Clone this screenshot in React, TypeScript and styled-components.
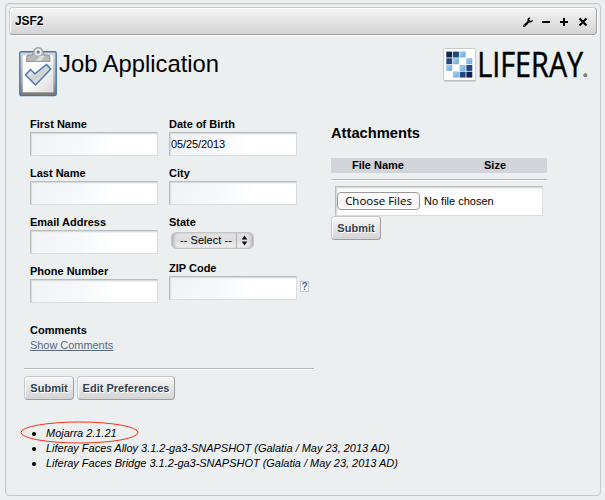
import React from 'react';
import styled, { createGlobalStyle, css } from 'styled-components';

const GlobalStyle = createGlobalStyle`
  * { box-sizing: border-box; }
  body {
    margin: 0;
    background: #ebeff0;
    font-family: "Liberation Sans", Arial, sans-serif;
    font-size: 11px;
    line-height: 15px;
    color: #000;
  }
`;

const Page = styled.div`
  height: 500px;
  padding: 3px 4px 4px 5px;
  overflow: hidden;
`;

const Portlet = styled.section`
  height: 493px;
  border: 1px solid #c4c8ca;
  border-radius: 4px;
  padding: 3px;
  box-shadow: inset 1px 1px 0 #e0e4e5;
`;

const Topper = styled.header`
  display: flex;
  justify-content: space-between;
  align-items: center;
  width: 588px;
  height: 28px;
  padding: 0 7px 0 5px;
  border: 1px solid;
  border-color: #c8c9ca #9e9e9e #9e9e9e #c8c9ca;
  border-radius: 4px;
  background: linear-gradient(#f4f4f4, #d4d4d4);
  box-shadow: 1px 1px 0 #fff, inset 1px 1px 0 #fff;
`;

const TopperTitle = styled.h1`
  margin: 0;
  font-size: 12px;
  letter-spacing: -0.05px;
  text-shadow: 1px 1px #fff;
`;

const Tools = styled.div`
  display: flex;
  align-items: center;
  gap: 8px;
  padding-top: 2px;
  svg { display: block; }
`;

const Banner = styled.div`
  display: flex;
  height: 64px;
  padding: 12px 8px 0 10px;
`;

const BannerTitle = styled.h2`
  flex: 1;
  margin: 3px 0 0 2px;
  font-size: 23.8px;
  line-height: 28px;
  font-weight: 400;
`;

const Columns = styled.div`
  display: flex;
  padding: 18px 0 0 15px;
`;

const FormColumn = styled.div`
  width: 290px;
`;

const Fields = styled.div`
  display: flex;
  gap: 11px;
  height: 206px;
  padding-left: 6px;
`;

const FieldStack = styled.div`
  width: 128px;
`;

const Field = styled.div<{ $gap?: number }>`
  margin-bottom: ${p => p.$gap ?? 10}px;
`;

const Label = styled.label`
  display: block;
  font-weight: 700;
`;

const inset = css`
  border: 1px solid;
  border-color: #b8bcbe #dadddd #dadddd #b8bcbe;
  box-shadow: inset 1px 1px 0 #d9dcde, inset 2px 2px 1px #f0f1f2;
`;

const Input = styled.input`
  ${inset}
  display: block;
  width: 128px;
  height: 24px;
  padding: 0 1px;
  border-radius: 0;
  outline: 0;
  background: linear-gradient(105deg, #f0f4f7 5%, #f6f9fb 40%, #fff 65%);
  font: 11px "Liberation Sans", Arial, sans-serif;
  letter-spacing: -0.1px;
`;

const ZipRow = styled.div`
  display: flex;
  align-items: center;
  gap: 3px;
  width: 142px;
`;

const Help = styled.span`
  flex: none;
  width: 9px;
  height: 11px;
  margin-top: -3px;
  border: 1px solid #c3c8cc;
  background: #fff;
  color: #3d659b;
  font-size: 10px;
  font-weight: 700;
  line-height: 10px;
  text-align: center;
`;

const Select = styled.button`
  display: flex;
  align-items: center;
  width: 83px;
  height: 17px;
  margin: 2px 0 0 2px;
  padding: 0;
  border: 1px solid #c3c5c6;
  border-radius: 5px;
  background: linear-gradient(#e4e4e4, #ddd 50%, #f2f2f2);
  box-shadow: inset 3px 0 3px -1px #b5b5b5, inset -3px 0 3px -1px #b5b5b5;
  font: 11px/13px "Liberation Sans", Arial, sans-serif;
  letter-spacing: 0.05px;
  color: #000;
  span { width: 64px; padding: 0 0 1px 8px; text-align: left; white-space: nowrap; }
  svg { display: block; border-left: 1px solid #b0b0b0; }
`;

const Comments = styled.div`
  padding-left: 6px;
`;

const Link = styled.a`
  color: #5b677d;
  text-decoration: underline;
  letter-spacing: -0.05px;
`;

const Rule = styled.hr`
  height: 2px;
  margin: 15px 0 6px;
  border: 0;
  border-top: 1px solid #b5b7b8;
  border-bottom: 1px solid #fff;
`;

const Buttons = styled.div`
  display: flex;
  gap: 3px;
`;

const Button = styled.button<{ $width: number }>`
  width: ${p => p.$width}px;
  height: 24px;
  padding: 0;
  border: 1px solid;
  border-color: #c8c9ca #9e9e9e #9e9e9e #c8c9ca;
  border-radius: 4px;
  background: linear-gradient(#f6f6f6, #d4d4d4);
  box-shadow: inset 1px 1px 0 #fff;
  color: #34404f;
  font: 700 11px "Liberation Sans", Arial, sans-serif;
  text-shadow: 1px 1px #fff;
  white-space: nowrap;
`;

const Attachments = styled.div`
  width: 216px;
  margin: 6px 0 0 17px;
`;

const Heading = styled.h3`
  margin: 0;
  font-size: 14.7px;
  line-height: 20px;
`;

const TableHead = styled.div`
  display: grid;
  grid-template-columns: 94px 1fr;
  height: 15px;
  margin-top: 15px;
  padding-right: 11px;
  background: #d1d5db;
  font-weight: 700;
  text-align: center;
  span:last-child { padding-left: 29px; }
`;

const TableRule = styled(Rule)`
  margin: 6px 0 5px;
`;

const Upload = styled.div`
  ${inset}
  display: flex;
  align-items: center;
  width: 208px;
  height: 30px;
  margin-left: 4px;
  padding: 0 0 0 1px;
  background: #fff;
`;

const Choose = styled.button`
  width: 83px;
  height: 18px;
  margin-right: 4px;
  padding: 0;
  border: 1px solid #999;
  border-radius: 4px;
  background: linear-gradient(#fff, #f3f3f3 60%, #fff);
  color: #000;
  font: 11.5px/16px "Open Sans", sans-serif;
  white-space: nowrap;
`;

const Versions = styled.ul`
  position: relative;
  margin: 26px 0 0;
  padding: 0 0 0 37px;
  font-style: italic;
  list-style: none;
`;

const Version = styled.li`
  display: flex;
  align-items: center;
  letter-spacing: -0.025px;
  white-space: nowrap;
  &::before {
    content: '';
    width: 4px;
    height: 4px;
    margin: 1px 10px 0 -14px;
    border-radius: 2px;
    background: #000;
  }
`;

const Highlight = styled.svg`
  position: absolute;
  left: 11px;
  top: -5px;
`;

const LogoMark = styled.svg`
  overflow: visible;
  margin-top: 1px;
`;

const Clipboard = () => (
  <svg width="38" height="51" viewBox="0 0 38 51">
    <defs>
      <linearGradient id="board" x2="0" y2="1"><stop stopColor="#d9dadb" /><stop offset=".65" stopColor="#aaa" /><stop offset="1" stopColor="#777" /></linearGradient>
      <linearGradient id="paper" x2="1" y2="1"><stop offset=".45" stopColor="#fff" /><stop offset="1" stopColor="#d8d8d8" /></linearGradient>
      <linearGradient id="tick" x2="1" y2="1"><stop stopColor="#fff" /><stop offset=".5" stopColor="#cfd0d1" /><stop offset="1" stopColor="#f5f5f5" /></linearGradient>
    </defs>
    <rect x=".8" y="4.8" width="36.4" height="43.8" rx="1.5" fill="url(#board)" stroke="#4676a9" strokeWidth="1.4" />
    <path d="M4 8.5H34V45H4Z" fill="url(#paper)" stroke="#eee" strokeWidth=".6" />
    <path d="M7.5 14.5V10.5Q7.5 8 10 8H13.5Q14.2 .6 19.2 .6T25 8H28.5Q31 8 31 10.5V14.5Z" fill="#b6b7b8" stroke="#858789" strokeWidth=".8" />
    <path d="M17 14L21 9H26L22 14Z" fill="#ddd" />
    <circle cx="19.2" cy="5.1" r="3" fill="#e9eced" stroke="#fff" strokeWidth=".7" />
    <circle cx="19.2" cy="5.1" r="1.6" fill="#587baa" />
    <path d="M6.5 28L11.5 22.5L15.8 26.8L27.5 17.5L31.8 22L16.5 38Z" fill="url(#tick)" stroke="#4676a9" strokeWidth="1.4" />
  </svg>
);

const NAVY = '#10244f';
const BLUE = '#214680';
const SKY = '#7bb4e5';
const tiles: [number, number, string][] = [
  [0, 0, NAVY], [1, 0, BLUE], [2, 0, SKY],
  [0, 1, BLUE], [1, 1, SKY], [3, 1, SKY],
  [0, 2, SKY], [2, 2, SKY], [3, 2, BLUE],
  [1, 3, SKY], [2, 3, BLUE], [3, 3, NAVY],
];

const Logo = () => (
  <LogoMark width="146" height="36" viewBox="0 0 146 36">
    <rect x=".5" y=".5" width="32" height="32" rx="1" fill="#fff" stroke="#c8cccd" />
    <path d="M1 33H33" stroke="#b3b6b8" />
    {tiles.map(([col, row, color]) => (
      <g key={`${col}-${row}`} transform={`translate(${3.3 + col * 6.7} ${3.6 + row * 6.7})`}>
        <rect width="5.9" height="5.9" fill={color} />
        {color === SKY && <path d="M0 0H5.9L0 5.9Z" fill="#a2ccef" opacity=".7" />}
      </g>
    ))}
    <text x="34.2" y="29" fontFamily="Open Sans, sans-serif" fontSize="35.5" textLength="106" lengthAdjust="spacingAndGlyphs" stroke="#000" strokeWidth=".5">LIFERAY</text>
    <circle cx="142.3" cy="27.2" r="1.7" fill="#888" stroke="#555" strokeWidth=".5" />
  </LogoMark>
);

const ToolIcons = () => (
  <Tools>
    <svg width="12" height="12" viewBox="0 0 12 12">
      <path d="M2.2 10L6.8 5.4" stroke="#000" strokeWidth="2.4" strokeLinecap="round" />
      <path d="M8.5 1.5Q5.3 1 5.4 4.5L7.3 6.5Q10.8 6.9 10.8 3.8L8.8 5L7.2 3.6Z" fill="#000" />
      <circle cx="2.3" cy="9.8" r=".5" fill="#eee" />
    </svg>
    <svg width="9" height="12"><path d="M0 6H8" stroke="#000" strokeWidth="2" /></svg>
    <svg width="10" height="12"><path d="M1 6H9M5 2V10" stroke="#000" strokeWidth="2" /></svg>
    <svg width="12" height="12"><path d="M2.5 2.5L9.5 9.5M9.5 2.5L2.5 9.5" stroke="#000" strokeWidth="2.1" /></svg>
  </Tools>
);

const TextField = ({ label, value }: { label: string; value?: string }) => (
  <Field>
    <Label>{label}</Label>
    <Input defaultValue={value} aria-label={label} />
  </Field>
);

export default function App() {
  return (
    <Page>
      <GlobalStyle />
      <Portlet>
        <Topper>
          <TopperTitle>JSF2</TopperTitle>
          <ToolIcons />
        </Topper>
        <Banner>
          <Clipboard />
          <BannerTitle>Job Application</BannerTitle>
          <Logo />
        </Banner>
        <Columns>
          <FormColumn>
            <Fields>
              <FieldStack>
                <TextField label="First Name" />
                <TextField label="Last Name" />
                <TextField label="Email Address" />
                <TextField label="Phone Number" />
              </FieldStack>
              <FieldStack>
                <TextField label="Date of Birth" value="05/25/2013" />
                <TextField label="City" />
                <Field $gap={12}>
                  <Label>State</Label>
                  <Select>
                    <span>-- Select --</span>
                    <svg width="16" height="15"><path d="M7.5 2.5L10.3 6.5H4.7ZM7.5 12.5L4.7 8.5H10.3Z" fill="#111" /></svg>
                  </Select>
                </Field>
                <Label>ZIP Code</Label>
                <ZipRow><Input aria-label="ZIP Code" /><Help>?</Help></ZipRow>
              </FieldStack>
            </Fields>
            <Comments>
              <Label>Comments</Label>
              <Link>Show Comments</Link>
            </Comments>
            <Rule />
            <Buttons>
              <Button $width={50}>Submit</Button>
              <Button $width={98}>Edit Preferences</Button>
            </Buttons>
          </FormColumn>
          <Attachments>
            <Heading>Attachments</Heading>
            <TableHead><span>File Name</span><span>Size</span></TableHead>
            <TableRule />
            <Upload><Choose>Choose Files</Choose>No file chosen</Upload>
            <Button $width={50}>Submit</Button>
          </Attachments>
        </Columns>
        <Versions>
          <Version>Mojarra 2.1.21</Version>
          <Version>Liferay Faces Alloy 3.1.2-ga3-SNAPSHOT (Galatia / May 23, 2013 AD)</Version>
          <Version>Liferay Faces Bridge 3.1.2-ga3-SNAPSHOT (Galatia / May 23, 2013 AD)</Version>
          <Highlight width="119" height="23"><ellipse cx="59.5" cy="11.5" rx="58.5" ry="10.5" fill="none" stroke="#f53418" /></Highlight>
        </Versions>
      </Portlet>
    </Page>
  );
}
